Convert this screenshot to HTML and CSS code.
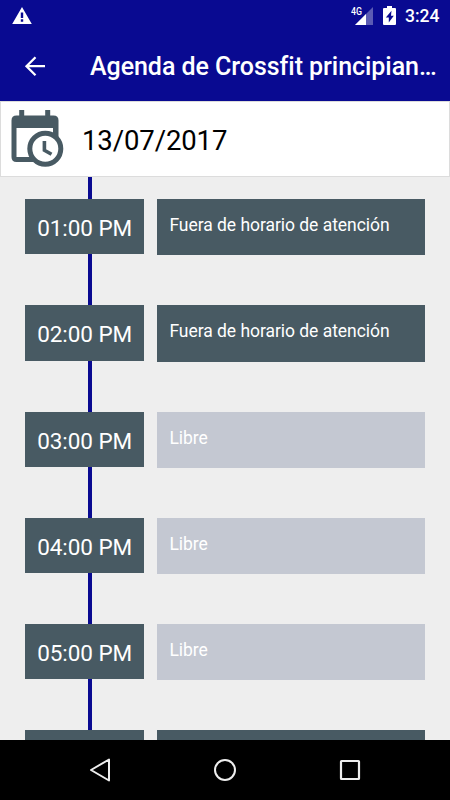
FILE: index.html
```html
<!DOCTYPE html>
<html lang="es">
<head>
<meta charset="utf-8">
<title>Agenda</title>
<link rel="stylesheet" href="styles.css">
</head>
<body>
<div class="screen">
  <div class="status">
    <svg class="warning" width="20" height="18" viewBox="0 0 20 18"><path fill="#fff" fill-rule="evenodd" d="M10 0 19.800 17H.2ZM8.800 5.500V11h2.400V5.500ZM8.800 12.300v2.400h2.400v-2.400Z"/></svg>
    <svg class="signal" width="23" height="20" viewBox="0 0 23 20"><path fill="#5b5bb4" d="M22 1V19H4Z"/><path fill="#fff" d="M15 8V19H4Z"/><text class="network" x="0" y="9" textLength="11" lengthAdjust="spacingAndGlyphs">4G</text></svg>
    <svg class="battery" width="14" height="20" viewBox="0 0 14 20"><path fill="#fff" fill-rule="evenodd" d="M4 0h5v2h3q1 0 1 1v15q0 1-1 1H1q-1 0-1-1V3q0-1 1-1h3ZM8.500 4.800 2.800 11.500h3V16.500l5-6.700H8Z"/></svg>
    <span class="clock">3:24</span>
  </div>
  <header class="toolbar">
    <svg class="back" width="22" height="22" viewBox="0 0 22 22"><path fill="none" stroke="#fff" stroke-width="2.300" d="M11.500 1.200 2.500 10.200l9 9M2.500 10.200h18.500"/></svg>
    <h1 class="title">Agenda de Crossfit principian…</h1>
  </header>
  <div class="datebar">
    <svg class="calendar" width="72" height="74" viewBox="0 0 72 74">
      <path fill="#485a63" fill-rule="evenodd" d="M19.200 8h5v5.500h21V8h5v5.500h3.300q5 0 5 5V55q0 5-5 5h-37q-5 0-5-5V18.500q0-5 5-5h2.700ZM16.500 26V55H53V26Z"/>
      <circle cx="45.300" cy="46.800" r="15.500" fill="#fff" stroke="#485a63" stroke-width="5"/>
      <path fill="none" stroke="#485a63" stroke-width="3.600" d="M44.400 39V48.300L51.500 52.300"/>
    </svg>
    <span class="date">13/07/2017</span>
  </div>
  <main class="agenda">
    <div class="row"><div class="time">01:00 PM</div><div class="slot">Fuera de horario de atención</div></div>
    <div class="row"><div class="time">02:00 PM</div><div class="slot">Fuera de horario de atención</div></div>
    <div class="row"><div class="time">03:00 PM</div><div class="slot free">Libre</div></div>
    <div class="row"><div class="time">04:00 PM</div><div class="slot free">Libre</div></div>
    <div class="row"><div class="time">05:00 PM</div><div class="slot free">Libre</div></div>
    <div class="row"><div class="time"></div><div class="slot"></div></div>
  </main>
  <nav class="navbar">
    <svg width="24" height="26" viewBox="0 0 24 26"><path fill="none" stroke="#eee" stroke-width="2" stroke-linejoin="round" d="M21 2.500V23.500L3 13Z"/></svg>
    <svg width="24" height="26" viewBox="0 0 24 26"><circle cx="12" cy="13" r="10" fill="none" stroke="#eee" stroke-width="2"/></svg>
    <svg width="24" height="26" viewBox="0 0 24 26"><rect x="3" y="4" width="18" height="18" rx=".5" fill="none" stroke="#eee" stroke-width="2.200"/></svg>
  </nav>
</div>
</body>
</html>
```
FILE: styles.css
```css
* { box-sizing: border-box; }
body { margin: 0; font-family: Roboto, sans-serif; }
.screen {
  width: 450px;
  height: 800px;
  display: flex;
  flex-direction: column;
  overflow: hidden;
  background: #eee;
}
.status {
  flex: none;
  height: 31px;
  display: flex;
  align-items: flex-start;
  padding: 6px 9px 0 12px;
  background: #090a91;
  color: #fff;
}
.warning { margin-top: 1px; }
.signal { margin-left: auto; }
.network { font: 500 10.5px Roboto, sans-serif; fill: #fff; }
.battery { margin-left: 9px; }
.clock {
  width: 36px;
  margin-left: 8px;
  font-size: 17.5px;
  font-weight: 500;
  line-height: 21px;
  white-space: nowrap;
}
.toolbar {
  flex: none;
  height: 70px;
  display: flex;
  align-items: center;
  padding: 2px 12px 0 24px;
  background: #090a91;
  color: #fff;
}
.back { flex: none; }
.title {
  margin: 0 0 0 44px;
  font-size: 25px;
  letter-spacing: -.05px;
  font-weight: 500;
  line-height: 32px;
  white-space: nowrap;
}
.datebar {
  flex: none;
  height: 76px;
  display: flex;
  align-items: center;
  background: #fff;
  border: 1px solid #dcdcdc;
}
.calendar { flex: none; margin-left: -1px; }
.date { margin: 3px 0 0 10px; font-size: 27.5px; letter-spacing: -.1px; color: #000; }
.agenda {
  flex: 1;
  min-height: 0;
  overflow: hidden;
  padding: 22.2px 25px 0;
  background: linear-gradient(#090a91, #090a91) 88px 0 / 4px 100% no-repeat #eee;
}
.row {
  height: 106.2px;
  display: flex;
  align-items: flex-start;
  gap: 12.5px;
}
.time {
  width: 119.4px;
  height: 55.2px;
  background: #485a63;
  color: #fff;
  font-size: 22.5px;
  letter-spacing: -.05px;
  line-height: 58px;
  text-align: center;
}
.slot {
  width: 268px;
  height: 56.2px;
  padding: 16px 12.5px;
  background: #485a63;
  color: #fff;
  font-size: 17.5px;
  letter-spacing: -.04px;
  line-height: 21px;
}
.free { background: #c4c8d2; }
.navbar {
  flex: none;
  height: 60px;
  display: flex;
  justify-content: center;
  align-items: center;
  gap: 101px;
  background: #000;
}
```
